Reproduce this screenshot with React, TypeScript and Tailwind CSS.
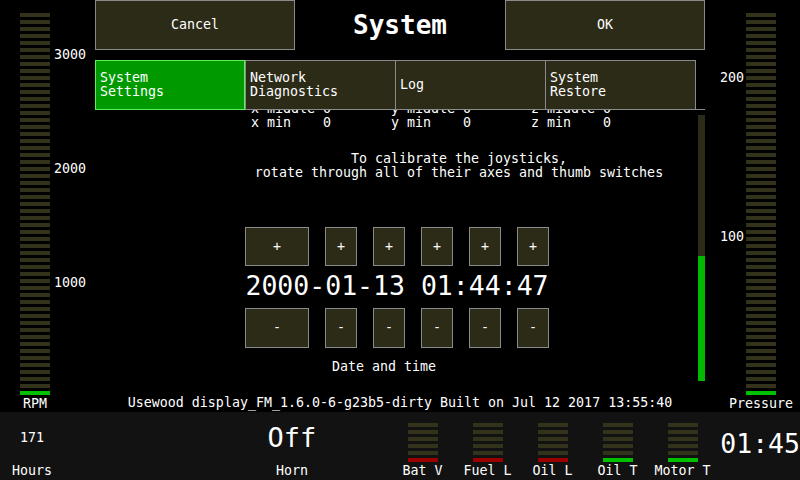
import React from "react";

const MONO = "font-['DejaVu_Sans_Mono','Liberation_Mono',monospace]";

function Bars({ count, lit, litClass }: { count: number; lit: number; litClass: string }) {
  return (
    <div className="flex w-[30px] flex-col gap-[3px]">
      {Array.from({ length: count }).map((_, i) => (
        <div key={i} className={`h-[4px] w-full ${i >= count - lit ? litClass : "bg-[#33321a]"}`} />
      ))}
    </div>
  );
}

function Btn({ className, children }: { className: string; children: React.ReactNode }) {
  return (
    <div className={`flex items-center justify-center border border-[#8a8a8a] bg-[#2c2b17] ${className}`}>
      {children}
    </div>
  );
}

const tabs = [
  ["System", "Settings"],
  ["Network", "Diagnostics"],
  ["Log"],
  ["System", "Restore"],
];

const axes = ["x", "y", "z"];

const small = [
  { label: "Bat V", lit: "bg-[#9a0000]" },
  { label: "Fuel L", lit: "bg-[#9a0000]" },
  { label: "Oil L", lit: "bg-[#9a0000]" },
  { label: "Oil T", lit: "bg-[#00c000]" },
  { label: "Motor T", lit: "bg-[#00c000]" },
];

export default function App() {
  return (
    <div className={`flex h-[480px] w-[800px] flex-col overflow-hidden bg-black text-white ${MONO} text-[13.3px] leading-[14px]`}>
      <div className="flex h-[412px]">
        {/* left gauge */}
        <div className="relative flex w-[95px] flex-col pl-[20px] pt-[13px]">
          <Bars count={55} lit={1} litClass="bg-[#00c000]" />
          <div className="flex h-[17px] w-[30px] items-center justify-center">RPM</div>
          <div className="absolute left-[54px] top-[48px]">3000</div>
          <div className="absolute left-[54px] top-[162px]">2000</div>
          <div className="absolute left-[54px] top-[276px]">1000</div>
        </div>

        {/* center */}
        <div className="flex w-[610px] flex-col">
          <div className="flex h-[50px]">
            <Btn className="w-[200px]">Cancel</Btn>
            <div className="flex w-[210px] items-center justify-center text-[26px] font-bold">System</div>
            <Btn className="w-[200px]">OK</Btn>
          </div>

          <div className="mt-[10px] flex h-[50px]">
            {tabs.map((t, i) => (
              <div
                key={i}
                className={`flex h-[50px] flex-col justify-center pl-[4px] ${
                  i === 0
                    ? "w-[150px] border border-[#5cf25c] bg-[#009a00]"
                    : i === 3
                    ? "w-[151px] border border-[#8a8a8a] bg-[#2c2b17]"
                    : "w-[150px] border-y border-l border-[#8a8a8a] bg-[#2c2b17]"
                }`}
              >
                {t.map((line) => (
                  <div key={line}>{line}</div>
                ))}
              </div>
            ))}
            <div className="flex-1 border-b border-[#8a8a8a]" />
          </div>

          <div className="flex h-[284px]">
            <div className="w-[603px] overflow-hidden">
              <div className="-mt-[8px] flex pl-[156px]">
                {axes.map((a) => (
                  <div key={a} className="w-[140px] whitespace-pre">
                    <div>{`${a} middle 0`}</div>
                    <div>{`${a} min    0`}</div>
                  </div>
                ))}
              </div>
              <div className="ml-[144px] mt-[22px] w-[440px] text-center">
                <div>To calibrate the joysticks,</div>
                <div>rotate through all of their axes and thumb switches</div>
              </div>
              <div className="ml-[150px] mt-[47px] flex gap-4">
                <Btn className="h-[39px] w-[64px]">+</Btn>
                {Array.from({ length: 5 }).map((_, i) => (
                  <Btn key={i} className="h-[39px] w-[32px]">+</Btn>
                ))}
              </div>
              <div className="ml-[150px] mt-[5px] w-[304px] text-center text-[26.5px] leading-[30px]">
                2000-01-13 01:44:47
              </div>
              <div className="ml-[150px] mt-[7px] flex gap-4">
                <Btn className="h-[40px] w-[64px]">-</Btn>
                {Array.from({ length: 5 }).map((_, i) => (
                  <Btn key={i} className="h-[40px] w-[32px]">-</Btn>
                ))}
              </div>
              <div className="ml-[237px] mt-[12px]">Date and time</div>
            </div>
            <div className="w-[7px] pt-[5px]">
              <div className="h-[141px] bg-[#2c2b17]" />
              <div className="h-[125px] bg-[#00b800]" />
            </div>
          </div>

          <div className="flex h-[18px] items-center justify-center whitespace-pre">
            Usewood display_FM_1.6.0-6-g23b5-dirty Built on Jul 12 2017 13:55:40
          </div>
        </div>

        {/* right gauge */}
        <div className="relative flex w-[95px] flex-col pl-[41px] pt-[13px]">
          <div className="flex w-[30px] flex-col items-center">
            <Bars count={55} lit={1} litClass="bg-[#00c000]" />
            <div className="flex h-[17px] items-center whitespace-pre">Pressure</div>
          </div>
          <div className="absolute left-[15px] top-[71px]">200</div>
          <div className="absolute left-[15px] top-[230px]">100</div>
        </div>
      </div>

      {/* bottom strip */}
      <div className="flex h-[68px] bg-[#121212]">
        <div className="flex w-[64px] flex-col items-center">
          <div className="flex h-[52px] items-center">171</div>
          <div>Hours</div>
        </div>
        <div className="w-[168px]" />
        <div className="flex w-[120px] flex-col items-center">
          <div className="flex h-[52px] items-center text-[27px]">Off</div>
          <div>Horn</div>
        </div>
        <div className="w-[38px]" />
        {small.map((g) => (
          <div key={g.label} className="flex w-[65px] flex-col items-center">
            <div className="h-[52px] pt-[11px]">
              <Bars count={6} lit={1} litClass={g.lit} />
            </div>
            <div className="whitespace-pre">{g.label}</div>
          </div>
        ))}
        <div className="flex w-[85px] items-center justify-end pb-[4px] text-[26.5px]">01:45</div>
      </div>
    </div>
  );
}
